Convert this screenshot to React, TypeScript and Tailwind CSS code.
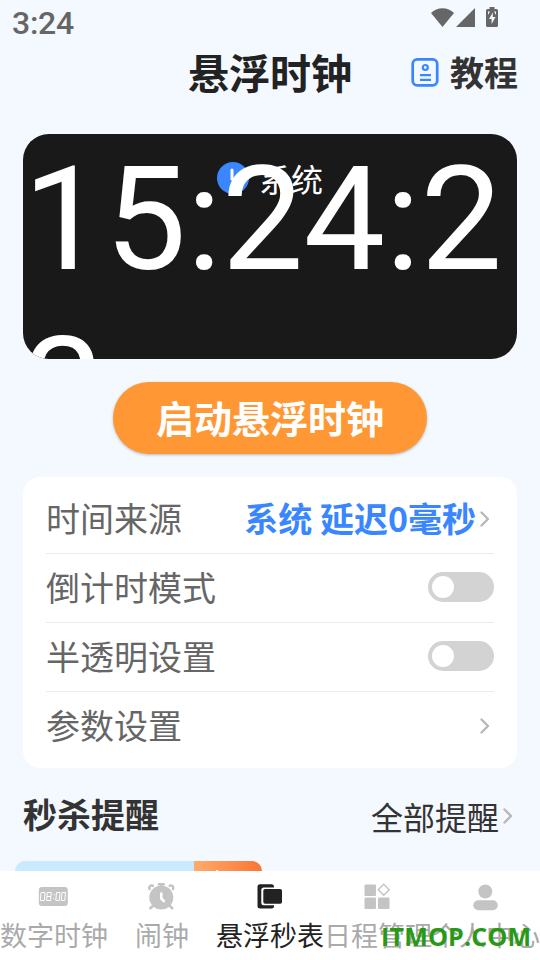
import React from 'react';

const Chevron = () => (
  <svg className="shrink-0" width="12" height="18" viewBox="0 0 12 18" fill="none" stroke="#b8b8b8" strokeWidth="2.4" strokeLinecap="round" strokeLinejoin="round">
    <path d="M2.500 2.500 9 9 2.500 15.500" />
  </svg>
);

const Toggle = () => (
  <div className="flex h-[30px] w-[66px] items-center rounded-full bg-[#d3d3d3] pl-1">
    <div className="size-[22px] rounded-full bg-white" />
  </div>
);

const StatusBar = () => (
  <header className="flex h-[46px] justify-between pl-3 pr-[42px]">
    <span className="font-[Roboto] text-[32px] leading-[46px] font-medium tracking-[-0.3px] text-[#666]">3:24</span>
    <svg className="mt-[6px]" width="67" height="22" viewBox="0 0 67 22" fill="#666">
      <path d="M0 7C6 0.500 17 0.500 23 7L11.500 21Z" />
      <path d="M25 21 44 2V21Z" />
      <path d="M58.500 1h5v2h2a1.500 1.500 0 0 1 1.500 1.500v15a1.500 1.500 0 0 1-1.500 1.500h-9a1.500 1.500 0 0 1-1.500-1.500v-15a1.500 1.500 0 0 1 1.500-1.500h2z" />
      <path d="M61.800 6.500 58 13h2.600v5l3.900-7h-2.700zM57 9V5.500h2M65 9V5.500h-2" fill="#f4f8ff" />
    </svg>
  </header>
);

const TitleBar = () => (
  <div className="grid h-[52px] grid-cols-[1fr_auto_1fr] items-center px-[22px]">
    <span />
    <h1 className="pb-0.5 text-[41px] leading-[50px] font-bold text-[#222]">悬浮时钟</h1>
    <div className="flex items-center justify-end gap-[11px]">
      <svg width="28" height="30" viewBox="0 0 28 30" fill="none" stroke="#3a86ff" strokeWidth="2.700">
        <rect x="1.700" y="2.300" width="24.500" height="26" rx="4.500" />
        <circle cx="14.300" cy="10.500" r="2.500" strokeWidth="2.200" />
        <path d="M9 18.200h11M9 22.900h11" strokeWidth="2.200" />
      </svg>
      <span className="text-[34px] leading-[52px] font-bold text-[#333]">教程</span>
    </div>
  </div>
);

const ClockPanel = () => (
  <section className="relative mx-[23px] mt-[36px] h-[225px] overflow-hidden rounded-[26px] bg-[#191919]">
    <div className="flex items-center justify-center gap-[10px] pt-[22px]">
      <svg width="32" height="32" viewBox="0 0 32 32" fill="none">
        <circle cx="16" cy="16" r="16" fill="#3a86ff" />
        <path d="M15 8v9l7 3" stroke="#fff" strokeWidth="3" strokeLinecap="round" />
      </svg>
      <span className="text-[32px] leading-[44px] text-white">系统</span>
    </div>
    <div className="absolute top-0 left-0 w-[494px] font-[Roboto] text-[145.5px] leading-[171px] break-all text-white">15:24:23</div>
  </section>
);

const Row = ({ label, children }: { label: string; children: React.ReactNode }) => (
  <div className="flex h-[69px] items-center justify-between border-b border-[#ebebeb] pb-0.5 last:border-transparent">
    <span className="text-[34px] leading-[50px] text-[#666]">{label}</span>
    {children}
  </div>
);

const Settings = () => (
  <section className="mx-[23px] mt-[23px] h-[291px] rounded-[17px] bg-white px-[23px] pt-2">
    <Row label="时间来源">
      <div className="flex items-center pr-[3px]">
        <span className="text-[34px] leading-[50px] font-bold text-[#3a86ff]">系统 延迟0毫秒</span>
        <span className="ml-[3px] pt-0.5"><Chevron /></span>
      </div>
    </Row>
    <Row label="倒计时模式"><Toggle /></Row>
    <Row label="半透明设置"><Toggle /></Row>
    <Row label="参数设置"><div className="pt-0.5 pr-[3px]"><Chevron /></div></Row>
  </section>
);

const Reminders = () => (
  <section className="h-[103px]">
    <div className="flex h-[93px] items-center justify-between pr-[26px] pb-0.5 pl-[23px]">
      <h2 className="text-[34px] leading-[50px] font-bold text-[#333]">秒杀提醒</h2>
      <div className="flex items-center gap-[3px] pt-1">
        <span className="text-[32px] leading-[46px] text-[#333]">全部提醒</span>
        <Chevron />
      </div>
    </div>
    <div className="ml-[15px] flex h-[10px] w-[247px] overflow-hidden rounded-t-[18px]">
      <div className="w-[179px] bg-[#c9e9ff]" />
      <div className="flex flex-1 items-end bg-linear-to-r from-[#ffab6b] to-[#f97532]">
        <div className="ml-[22px] h-px w-[2px] bg-white/80" />
      </div>
    </div>
  </section>
);

const icons = [
  <svg width="30" height="30" viewBox="0 0 30 30">
    <rect x="0.800" y="6" width="29" height="19" rx="3" fill="#c4c4c4" />
    <g fill="none" stroke="#fff" strokeWidth="1">
      <path d="M3 11.500h4l-.7 8h-4zM9.300 11.500h4l-.7 8h-4zM9 15.500h4M18.500 11.500h3.500l-.7 8h-3.500zM24 11.500h3.500l-.7 8h-3.500z" />
      <path d="M16 13v1.200M15.800 17v1.200" />
    </g>
  </svg>,
  <svg width="30" height="30" viewBox="0 0 30 30" fill="none" stroke="#c4c4c4" strokeWidth="2.600" strokeLinecap="round">
    <circle cx="15.300" cy="16.500" r="12" fill="#c4c4c4" stroke="none" />
    <path d="M12.800 3.300h5M15.300 3.500v3M3.500 8C2.800 5.500 4.300 4 6.800 4.800M27.100 8C27.800 5.500 26.300 4 23.800 4.800M6.800 25 4.300 27.200M23.800 25l2.500 2.200" />
    <path d="M15.300 12.500v5l2.500 2.500" stroke="#fff" strokeWidth="2.600" />
  </svg>,
  <svg width="30" height="30" viewBox="-0.5 0 30 30" fill="#222">
    <rect x="3" y="3.300" width="16.500" height="24.300" rx="2.500" />
    <rect x="6.800" y="6.500" width="22" height="17.700" rx="2.500" fill="#fff" />
    <rect x="8.800" y="8" width="18.700" height="14.800" rx="1.800" />
  </svg>,
  <svg width="30" height="30" viewBox="0 0 30 30" fill="#c4c4c4">
    <rect x="2.500" y="3.500" width="11.500" height="11.500" rx="1" />
    <rect x="2.500" y="16.500" width="11.500" height="11.500" rx="1" />
    <rect x="16" y="16.500" width="11.500" height="11.500" rx="1" />
    <path d="m21.700 3.200 5.500 5.500-5.500 5.500-5.500-5.500z" fill="none" stroke="#c4c4c4" strokeWidth="1.400" />
  </svg>,
  <svg width="30" height="30" viewBox="0 0 30 30" fill="#c4c4c4">
    <circle cx="15.300" cy="10.500" r="7" />
    <rect x="3.300" y="19.200" width="24.500" height="10" rx="5" />
  </svg>,
];
const labels = ['数字时钟', '闹钟', '悬浮秒表', '日程管理', '个人中心'];

const BottomNav = () => (
  <nav className="relative grid h-[89px] grid-cols-5 bg-white pt-[10px]">
    {labels.map((label, i) => (
      <div key={label} className="flex flex-col items-center">
        <div className="pr-0.5">{icons[i]}</div>
        <span className={i === 2 ? 'mt-1 text-[27px] leading-10 whitespace-nowrap text-[#222]' : 'mt-1 text-[27px] leading-10 whitespace-nowrap text-[#aaa]'}>{label}</span>
      </div>
    ))}
    <span className="absolute top-[49px] left-[381px] font-['Open_Sans'] text-[25px] leading-8 font-bold tracking-[0.2px] text-[#279914]">ITMOP.COM</span>
  </nav>
);

export default function App() {
  return (
    <main className="h-[960px] w-[540px] overflow-hidden bg-[#f4f8ff] font-['Noto_Sans_CJK_SC',sans-serif]">
      <StatusBar />
      <TitleBar />
      <ClockPanel />
      <button className="mx-auto mt-[23px] block h-[72px] w-[314px] rounded-full bg-[#ff9834] pb-0.5 text-[38px] leading-[70px] font-bold text-white shadow-[0_1px_3px_#0004]">启动悬浮时钟</button>
      <Settings />
      <Reminders />
      <BottomNav />
    </main>
  );
}
